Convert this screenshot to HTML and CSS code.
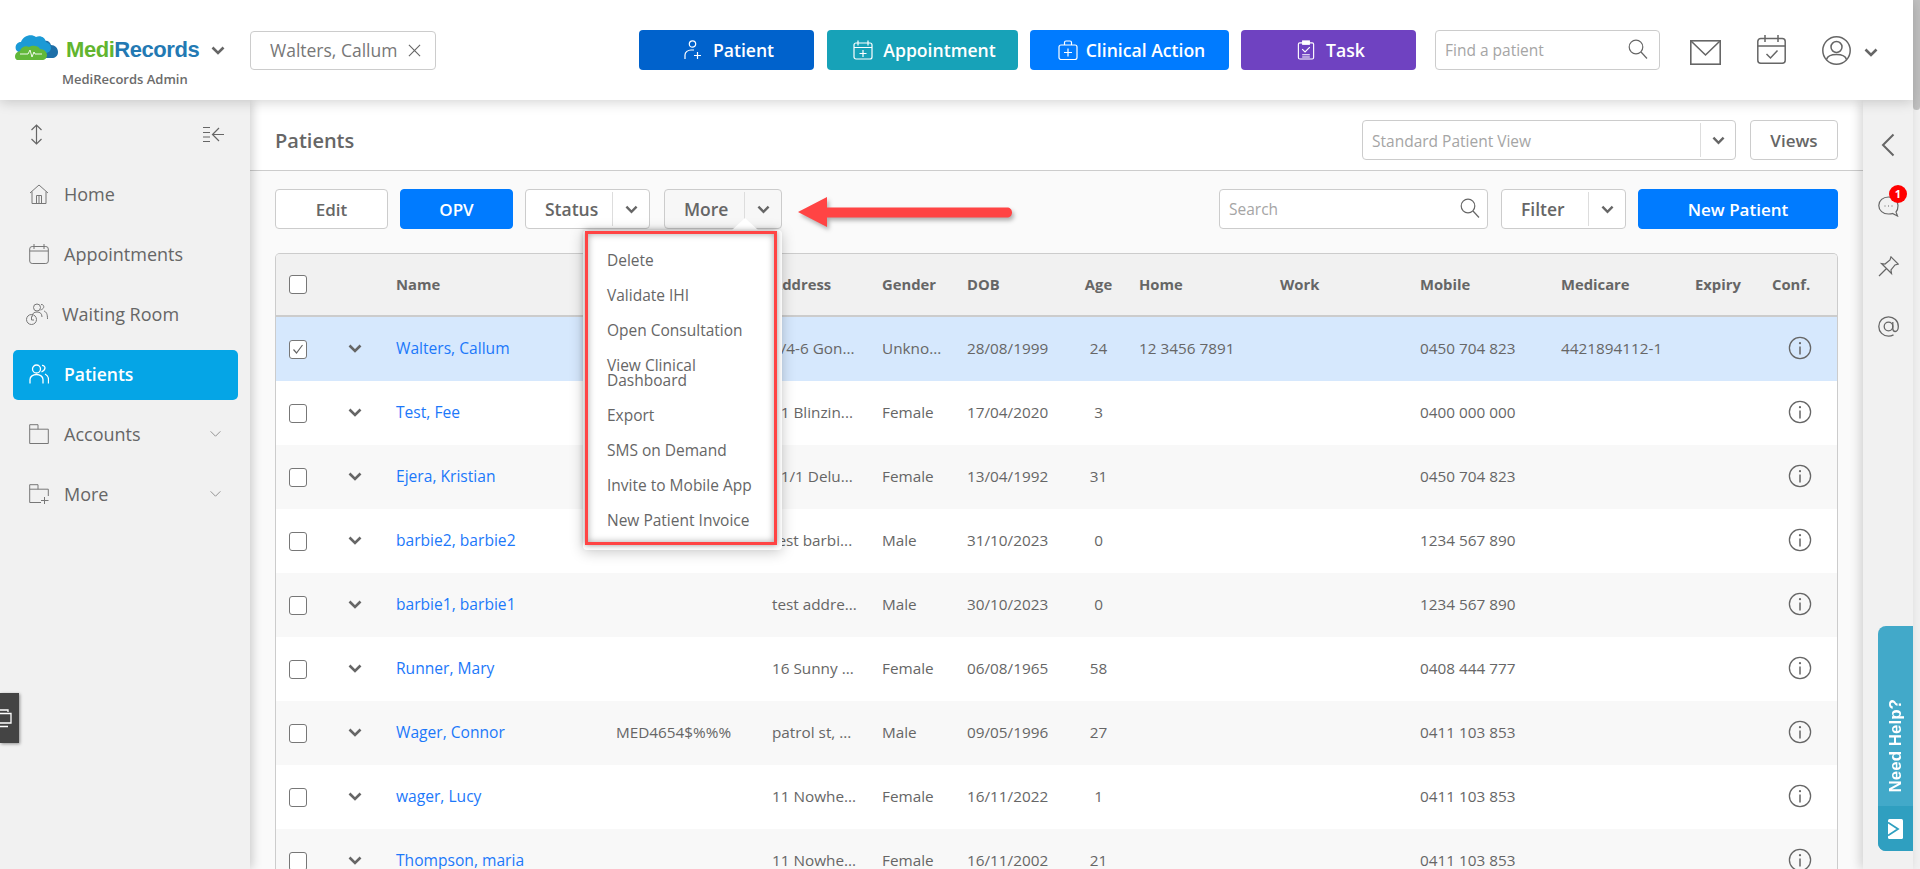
FILE: index.html
```html
<!DOCTYPE html>
<html lang="en">
<head>
<meta charset="utf-8">
<title>MediRecords - Patients</title>
<link rel="stylesheet" href="styles.css">
</head>
<body>
<svg class="defs" width="0" height="0" aria-hidden="true">
  <symbol id="chev" viewBox="0 0 14 9"><path d="M1.5 1.5 7 7l5.5-5.5" fill="none" stroke="currentColor" stroke-width="2.6"/></symbol>
  <symbol id="thin-chev" viewBox="0 0 14 9"><path d="M1.5 1.5 7 7l5.5-5.5" fill="none" stroke="currentColor" stroke-width="1"/></symbol>
  <symbol id="search" viewBox="0 0 20 20"><circle cx="8" cy="8" r="6.8" fill="none" stroke="currentColor" stroke-width="1.2"/><path d="m13 13 6 6.5" fill="none" stroke="currentColor" stroke-width="1.2"/></symbol>
  <symbol id="info" viewBox="0 0 24 24"><circle cx="12" cy="12" r="10.6" fill="none" stroke="currentColor" stroke-width="1.3"/><path d="M12 10.5v8" stroke="currentColor" stroke-width="1.5"/><circle cx="12" cy="7.2" r="1.1" fill="currentColor"/></symbol>
</svg>
<div class="page">
  <div class="app">
    <header class="topbar">
      <div class="brand">
        <div class="brand-row">
          <svg class="cloud" viewBox="0 0 44 26">
            <path d="M30 7c4-1 6 1 7 4 4 0 7 3 7 7 0 4-3 6-6 6H26z" fill="#1d6fa8"/>
            <path d="M3 17C0 14 2 8 7 8 9 2 17-1 22 3c4-2 9 0 10 5 3 1 5 3 5 6 0 3-3 5-6 5H6z" fill="#1b9ad6"/>
            <path d="M3 26c-3-1-3-8 3-9 1-4 6-6 9-4 3-2 9-2 11 2 4 0 7 3 7 6 0 3-2 5-5 5z" fill="#62b83a"/>
            <path d="M6 20h8l2-4 2 7 2-5 1 2h7" fill="none" stroke="#fff" stroke-width=".9"/>
          </svg>
          <span class="brand-name"><span class="medi">Medi</span><span class="records">Records</span></span>
          <svg class="brand-chev"><use href="#chev"/></svg>
        </div>
        <div class="brand-sub">MediRecords Admin</div>
      </div>
      <div class="patient-tag">
        <span>Walters, Callum</span>
        <svg class="tag-x" viewBox="0 0 14 14"><path d="m1 1 12 12M13 1 1 13" stroke="currentColor" stroke-width="1.2"/></svg>
      </div>
      <div class="actions">
        <button class="action a-patient">
          <svg viewBox="0 0 18 20" class="a-icon"><circle cx="8.5" cy="4" r="3.2"/><path d="M1 19v-4c0-3 3-5 6-5h3M13.5 12v7M10 15.5h7"/></svg>Patient</button>
        <button class="action a-appt">
          <svg viewBox="0 0 20 20" class="a-icon"><rect x="1" y="3" width="18" height="16" rx="2"/><path d="M5 .5v5M15 .5v5M1 7.5h18M10 10v7M6.5 13.5h7"/></svg>Appointment</button>
        <button class="action a-clin">
          <svg viewBox="0 0 20 20" class="a-icon"><rect x="1" y="5" width="18" height="14.5" rx="2"/><path d="M6.5 5V2.5C6.5 1.5 7.5 1 8 1h4c.5 0 1.5.5 1.5 1.5V5M10 8.5v8M6 12.5h8"/></svg>Clinical Action</button>
        <button class="action a-task">
          <svg viewBox="0 0 18 21" class="a-icon"><rect x="1" y="3" width="16" height="17" rx="1.5"/><rect x="5.5" y="1" width="7" height="3.5" fill="#fff"/><path d="m5 9.5 3 3 5-5M5 15.5h8M5 17.8h8"/></svg>Task</button>
      </div>
      <div class="find">
        <span>Find a patient</span>
        <svg class="find-icon"><use href="#search"/></svg>
      </div>
      <svg class="t-mail" viewBox="0 0 31 25"><rect x=".8" y=".8" width="29.4" height="23.4" fill="none" stroke="#666" stroke-width="1.6"/><path d="m1 1 14.5 14L30 1" fill="none" stroke="#666" stroke-width="1.6"/></svg>
      <svg class="t-cal" viewBox="0 0 29 29"><rect x=".8" y="3.5" width="27.4" height="24.7" rx="3" fill="none" stroke="#666" stroke-width="1.5"/><path d="M.8 11h27.4M8 0v7M21 0v7M9.5 19l4 4 7-7.5" fill="none" stroke="#666" stroke-width="1.5"/></svg>
      <svg class="t-user" viewBox="0 0 29 29"><circle cx="14.5" cy="14.5" r="13.7" fill="none" stroke="#666" stroke-width="1.5"/><circle cx="14.5" cy="11" r="5.5" fill="none" stroke="#666" stroke-width="1.5"/><path d="M4.5 23.5c1-3.5 4.5-5 10-5s9 1.500 10 5" fill="none" stroke="#666" stroke-width="1.5"/></svg>
      <svg class="t-chev"><use href="#chev"/></svg>
    </header>
    <div class="body">
      <aside class="sidebar">
        <div class="side-top">
          <svg class="side-updown" viewBox="0 0 13 21"><path d="M6.5 1v19M1.5 6l5-5 5 5M1.5 15l5 5 5-5" fill="none" stroke="#666" stroke-width="1.2"/></svg>
          <svg class="side-collapse" viewBox="0 0 21 17"><path d="M0 1.5h7M0 6.5h7M0 11h7M0 15.5h7M21 8.5H10M16 2l-6.5 6.500L16 15" fill="none" stroke="#666" stroke-width="1.2"/></svg>
        </div>
        <nav class="side-nav">
          <a class="nav-item">
            <svg class="nav-icon" viewBox="0 0 20 20"><path d="M1 9 10 1l9 8M3 7.5V19.5h14V7.5M7.5 19.5v-8h5v8M10 11.5v8" fill="none" stroke="currentColor"/></svg>
            <span>Home</span></a>
          <a class="nav-item">
            <svg class="nav-icon" viewBox="0 0 20 20"><rect x=".7" y="2.5" width="18.6" height="17" rx="2.5" fill="none" stroke="currentColor"/><path d="M.7 7h18.6M5 0v5M15 0v5" fill="none" stroke="currentColor"/></svg>
            <span>Appointments</span></a>
          <a class="nav-item">
            <svg class="nav-icon nav-wait" viewBox="0 0 22 22"><circle cx="11" cy="4.5" r="3.5" fill="none" stroke="currentColor"/><path d="M6 14c0-3.5 2-5 5-5 3 0 5 1.5 5 5M15 1.5c3-.5 4.5 4-.5 5.5M18 8c2.5 1 3.5 3 3.5 8" fill="none" stroke="currentColor"/><circle cx="5.5" cy="16.5" r="5" fill="none" stroke="currentColor"/><path d="M5.500 13.500v3.500h2.500" fill="none" stroke="currentColor"/></svg>
            <span>Waiting Room</span></a>
          <a class="nav-item active">
            <svg class="nav-icon" viewBox="0 0 20 20"><circle cx="7.5" cy="5" r="4" fill="none" stroke="currentColor" stroke-width="1.3"/><path d="M1 19.5v-4c0-3 3-5 6.5-5s6.500 2 6.500 5v4M13 1.500c3-.5 5 4-.5 6.500M16 10c2 1 3.500 3 3.500 5.500v4" fill="none" stroke="currentColor" stroke-width="1.3"/></svg>
            <span>Patients</span></a>
          <a class="nav-item">
            <svg class="nav-icon" viewBox="0 0 20 20"><path d="M.7 19.5V.7h8.300v4.500h10.300v14.300zM.7 5.200h8.300" fill="none" stroke="currentColor"/></svg>
            <span>Accounts</span><svg class="nav-chev"><use href="#thin-chev"/></svg></a>
          <a class="nav-item">
            <svg class="nav-icon" viewBox="0 0 20 20"><path d="M12 18.5H.7V.7h8.300v4.500h10.300V12M.7 5.200h8.300M15.500 13v7M12 16.500h7.500" fill="none" stroke="currentColor"/></svg>
            <span>More</span><svg class="nav-chev"><use href="#thin-chev"/></svg></a>
        </nav>
        <div class="remote-tab">
          <svg class="remote-icon" viewBox="0 0 12 19"><path d="M-4 2.5V1H8v2M-6 4.5H11V14H-6zM-3 17.5H8" fill="none" stroke="#fff" stroke-width="1.3"/></svg>
        </div>
      </aside>
      <main class="main">
        <div class="title-bar">
          <h1 class="title">Patients</h1>
          <div class="title-tools">
            <div class="view-select">
              <span class="view-label">Standard Patient View</span>
              <span class="split-sep"></span>
              <span class="split-chev"><svg class="chev-ico"><use href="#chev"/></svg></span>
            </div>
            <button class="btn btn-views">Views</button>
          </div>
        </div>
        <div class="toolbar">
          <button class="btn btn-edit">Edit</button>
          <button class="btn btn-primary btn-opv">OPV</button>
          <div class="split split-status">
            <span class="split-text">Status</span><span class="split-sep"></span>
            <span class="split-chev"><svg class="chev-ico"><use href="#chev"/></svg></span>
          </div>
          <div class="split split-more">
            <span class="split-text">More</span><span class="split-sep"></span>
            <span class="split-chev"><svg class="chev-ico"><use href="#chev"/></svg></span>
            <div class="menu">
              <div class="menu-item">Delete</div>
              <div class="menu-item">Validate IHI</div>
              <div class="menu-item">Open Consultation</div>
              <div class="menu-item">View Clinical Dashboard</div>
              <div class="menu-item">Export</div>
              <div class="menu-item">SMS on Demand</div>
              <div class="menu-item">Invite to Mobile App</div>
              <div class="menu-item">New Patient Invoice</div>
              <div class="menu-mark"></div>
            </div>
            <svg class="red-arrow" viewBox="0 0 225 40"><path d="M4 18 33 3v10.5h180c3 0 5 2 5 5s-2 5-5 5H33V33z" fill="#ff4444"/></svg>
          </div>
          <div class="search">
            <span>Search</span>
            <svg class="find-icon"><use href="#search"/></svg>
          </div>
          <div class="split split-filter">
            <span class="split-text">Filter</span><span class="split-sep"></span>
            <span class="split-chev"><svg class="chev-ico"><use href="#chev"/></svg></span>
          </div>
          <button class="btn btn-primary btn-new">New Patient</button>
        </div>
        <div class="table">
          <div class="tr th">
            <div class="c-check"><span class="box"></span></div><div></div>
            <div>Name</div><div></div><div>Address</div><div>Gender</div><div>DOB</div><div>Age</div><div>Home</div><div>Work</div><div>Mobile</div><div>Medicare</div><div>Expiry</div><div>Conf.</div>
          </div>
          <div class="tr selected">
            <div class="c-check"><span class="box"><svg class="tick" viewBox="0 0 14 14"><path d="m2.5 7.5 3 3.5L11.5 3" fill="none" stroke="#666" stroke-width="1.2"/></svg></span></div>
            <div><svg class="row-chev"><use href="#chev"/></svg></div>
            <div class="name">Walters, Callum</div><div></div><div>1/4-6 Gon...</div><div>Unkno...</div><div>28/08/1999</div><div>24</div><div>12 3456 7891</div><div></div><div>0450 704 823</div><div>4421894112-1</div><div></div><div class="c-info"><svg class="info-ico"><use href="#info"/></svg></div>
          </div>
          <div class="tr">
            <div class="c-check"><span class="box"></span></div>
            <div><svg class="row-chev"><use href="#chev"/></svg></div>
            <div class="name">Test, Fee</div><div></div><div>11 Blinzin...</div><div>Female</div><div>17/04/2020</div><div>3</div><div></div><div></div><div>0400 000 000</div><div></div><div></div><div class="c-info"><svg class="info-ico"><use href="#info"/></svg></div>
          </div>
          <div class="tr">
            <div class="c-check"><span class="box"></span></div>
            <div><svg class="row-chev"><use href="#chev"/></svg></div>
            <div class="name">Ejera, Kristian</div><div></div><div>11/1 Delu...</div><div>Female</div><div>13/04/1992</div><div>31</div><div></div><div></div><div>0450 704 823</div><div></div><div></div><div class="c-info"><svg class="info-ico"><use href="#info"/></svg></div>
          </div>
          <div class="tr">
            <div class="c-check"><span class="box"></span></div>
            <div><svg class="row-chev"><use href="#chev"/></svg></div>
            <div class="name">barbie2, barbie2</div><div></div><div>test barbi...</div><div>Male</div><div>31/10/2023</div><div>0</div><div></div><div></div><div>1234 567 890</div><div></div><div></div><div class="c-info"><svg class="info-ico"><use href="#info"/></svg></div>
          </div>
          <div class="tr">
            <div class="c-check"><span class="box"></span></div>
            <div><svg class="row-chev"><use href="#chev"/></svg></div>
            <div class="name">barbie1, barbie1</div><div></div><div>test addre...</div><div>Male</div><div>30/10/2023</div><div>0</div><div></div><div></div><div>1234 567 890</div><div></div><div></div><div class="c-info"><svg class="info-ico"><use href="#info"/></svg></div>
          </div>
          <div class="tr">
            <div class="c-check"><span class="box"></span></div>
            <div><svg class="row-chev"><use href="#chev"/></svg></div>
            <div class="name">Runner, Mary</div><div></div><div>16 Sunny ...</div><div>Female</div><div>06/08/1965</div><div>58</div><div></div><div></div><div>0408 444 777</div><div></div><div></div><div class="c-info"><svg class="info-ico"><use href="#info"/></svg></div>
          </div>
          <div class="tr">
            <div class="c-check"><span class="box"></span></div>
            <div><svg class="row-chev"><use href="#chev"/></svg></div>
            <div class="name">Wager, Connor</div><div>MED4654$%%%</div><div>patrol st, ...</div><div>Male</div><div>09/05/1996</div><div>27</div><div></div><div></div><div>0411 103 853</div><div></div><div></div><div class="c-info"><svg class="info-ico"><use href="#info"/></svg></div>
          </div>
          <div class="tr">
            <div class="c-check"><span class="box"></span></div>
            <div><svg class="row-chev"><use href="#chev"/></svg></div>
            <div class="name">wager, Lucy</div><div></div><div>11 Nowhe...</div><div>Female</div><div>16/11/2022</div><div>1</div><div></div><div></div><div>0411 103 853</div><div></div><div></div><div class="c-info"><svg class="info-ico"><use href="#info"/></svg></div>
          </div>
          <div class="tr">
            <div class="c-check"><span class="box"></span></div>
            <div><svg class="row-chev"><use href="#chev"/></svg></div>
            <div class="name">Thompson, maria</div><div></div><div>11 Nowhe...</div><div>Female</div><div>16/11/2002</div><div>21</div><div></div><div></div><div>0411 103 853</div><div></div><div></div><div class="c-info"><svg class="info-ico"><use href="#info"/></svg></div>
          </div>
        </div>
      </main>
      <aside class="rail">
        <svg class="r-back" viewBox="0 0 14 24"><path d="M12.5 1.5 2 12l10.5 10.5" fill="none" stroke="#666" stroke-width="2"/></svg>
        <div class="r-chat">
          <svg class="r-ico" viewBox="0 0 21 21"><path d="M10.5 1C5 1 .8 4.5.8 9.5S5 18 10.5 18c1.5 0 3 0 4-.5l5 2.5-1.5-4c1.5-1.5 2-4 2-6.5C20 4.5 16 1 10.5 1z" fill="none" stroke="#666" stroke-width="1.2"/><path d="M6.5 10h1M10 10h1M13.5 10h1" stroke="#666" stroke-width="1"/></svg>
          <span class="r-badge">1</span>
        </div>
        <svg class="r-ico" viewBox="0 0 21 21"><path d="M13 .8 20.2 8 17 9l-4 5 .5 3.5L3.5 7.5 7 8l5-4zM8.5 12.5 1 20" fill="none" stroke="#666" stroke-width="1.2"/></svg>
        <svg class="r-ico" viewBox="0 0 21 21"><circle cx="10.5" cy="10.5" r="4.3" fill="none" stroke="#666" stroke-width="1.3"/><path d="M14.8 6v6.5c0 2 1 3 2.5 3s3-2 3-5c0-5.5-4.5-9.7-9.8-9.7S.8 5 .8 10.5s4.3 9.7 9.7 9.7c2 0 3.5-.5 5-1.3" fill="none" stroke="#666" stroke-width="1.3"/></svg>
        <div class="help">
          <div class="help-label"><span>Need Help?</span></div>
          <div class="help-icon"><svg viewBox="0 0 15 20" class="help-svg"><rect width="15" height="20" rx="1.5" fill="#fff"/><path d="M0 3.5 10 10 0 16.5" fill="none" stroke="#2f9fc0" stroke-width="1.8"/></svg></div>
        </div>
      </aside>
    </div>
  </div>
  <div class="scrollbar"><div class="thumb"></div></div>
</div>
</body>
</html>
```
FILE: styles.css
```css
* { box-sizing: border-box; }
html, body { margin: 0; height: 869px; overflow: hidden; }
body { font-family: "Open Sans", "Liberation Sans", sans-serif; color: #666; background: #fff; }
.defs { position: absolute; }
button { font: inherit; cursor: pointer; }
svg { display: block; flex: none; }

.page { display: flex; height: 869px; overflow: hidden; }
.app { flex: 1; min-width: 0; display: flex; flex-direction: column; }
.scrollbar { width: 7px; background: #f1f1f1; }
.thumb { height: 110px; background: #c1c1c1; border-radius: 0 0 4px 4px; }

/* top bar */
.topbar { height: 100px; flex: none; display: flex; align-items: center; padding: 0 35px 0 14px; background: #fff; box-shadow: 0 2px 12px rgba(0,0,0,.18); position: relative; z-index: 5; }
.brand { width: 212px; margin-right: 24px; align-self: flex-start; padding-top: 36px; }
.brand-row { display: flex; align-items: center; height: 28px; }
.cloud { width: 44px; height: 26px; margin: -6px 8px 0 0; }
.brand-name { font-family: "Liberation Sans", Arial, sans-serif; font-weight: 700; font-size: 22px; letter-spacing: -.45px; white-space: nowrap; }
.medi { color: #62b52f; }
.records { color: #2379b3; }
.brand-chev { width: 14px; height: 9px; margin-left: 12px; color: #666; }
.brand-sub { margin: 6px 0 0 48px; font-size: 13px; font-weight: 600; line-height: 18px; color: #6b6b6b; white-space: nowrap; }
.patient-tag { width: 186px; height: 39px; display: flex; align-items: center; padding-left: 19px; border: 1px solid #ccc; border-radius: 4px; font-size: 17.5px; color: #777; white-space: nowrap; }
.tag-x { width: 13px; height: 13px; margin-left: 11px; color: #666; }
.actions { display: flex; gap: 12px; margin-left: 203px; }
.action { height: 40px; display: flex; align-items: center; justify-content: center; gap: 10px; padding: 0 0 0 4px; border: 0; border-radius: 4px; color: #fff; font-size: 17.6px; font-weight: 600; white-space: nowrap; }
.a-icon { height: 20px; width: 20px; fill: none; stroke: #fff; stroke-width: 1.2; }
.a-patient { width: 175px; background: #0062cc; margin-right: 1px; }
.a-appt { width: 191px; background: #17a2b8; }
.a-clin { width: 199px; background: #007bff; gap: 8px; }
.a-task { width: 175px; background: #6f42c1; }
.find { width: 225px; height: 40px; margin-left: 19px; padding: 0 11px 0 9px; display: flex; align-items: center; justify-content: space-between; border: 1px solid #ccc; border-radius: 4px; font-size: 15.5px; color: #a5a5a5; }
.find-icon { width: 20px; height: 20px; color: #666; margin-top: -2px; }
.t-mail { width: 31px; height: 25px; margin: 4px 0 0 30px; }
.t-cal { width: 29px; height: 29px; margin: -1px 0 0 36px; }
.t-user { width: 29px; height: 29px; margin: 0 0 0 36px; }
.t-chev { width: 14px; height: 9px; margin: 4px 0 0 13px; color: #666; }

/* layout */
.body { flex: 1; min-height: 0; display: flex; }

/* sidebar */
.sidebar { width: 250px; flex: none; background: #f1f1f1; box-shadow: 2px 0 10px rgba(0,0,0,.2); position: relative; z-index: 3; }
.side-top { height: 70px; display: flex; justify-content: space-between; align-items: center; padding: 0 26px 2px 30px; }
.side-updown { width: 13px; height: 21px; }
.side-collapse { width: 21px; height: 17px; }
.side-nav { display: flex; flex-direction: column; gap: 10px; padding: 0 12px 0 13px; }
.nav-item { height: 50px; display: flex; align-items: center; padding: 0 16px 2px 16px; border-radius: 5px; font-size: 18px; color: #666; }
.nav-item span { flex: 1; }
.nav-icon { width: 20px; height: 20px; margin-right: 15px; color: #777; }
.nav-wait { width: 22px; height: 22px; margin-left: -3px; margin-right: 14px; }
.nav-item.active { background: #05a5e6; color: #fff; font-weight: 600; font-size: 17.5px; }
.nav-item.active .nav-icon { color: #fff; }
.nav-chev { width: 13px; height: 8px; color: #888; }
.remote-tab { position: absolute; left: 0; top: 593px; width: 19px; height: 50px; background: #444; box-shadow: 1px 1px 3px rgba(0,0,0,.4); display: flex; align-items: center; }
.remote-icon { width: 12px; height: 19px; }

/* main */
.main { flex: 1; min-width: 0; background: #fafafa; overflow: hidden; }
.title-bar { height: 71px; padding: 10px 25px 0; display: flex; align-items: center; justify-content: space-between; background: #fff; border-bottom: 1px solid #ccc; }
.title { margin: 0; font-size: 20px; font-weight: 600; color: #666; }
.title-tools { display: flex; gap: 14px; }
.view-select { width: 374px; height: 40px; display: flex; align-items: center; border: 1px solid #ccc; border-radius: 4px; background: #fff; font-size: 15.5px; color: #a5a5a5; padding-left: 9px; }
.view-label { flex: 1; padding-top: 2px; }
.view-select .split-chev { width: 34px; }
.split-sep { width: 1px; height: 34px; background: #ddd; flex: none; }
.split-chev { width: 36px; flex: none; display: flex; justify-content: center; color: #666; }
.chev-ico { width: 13px; height: 9px; }
.btn { height: 40px; border: 1px solid #ccc; border-radius: 4px; background: #fff; color: #666; font-size: 17px; font-weight: 600; }
.btn-views { width: 88px; }
.toolbar { display: flex; align-items: center; padding: 18px 25px 0; margin-bottom: 24px; }
.btn-edit { width: 113px; margin-right: 12px; }
.btn-primary { background: #007bff; border-color: #007bff; color: #fff; }
.btn-opv { width: 113px; margin-right: 12px; }
.split { height: 40px; display: flex; align-items: center; border: 1px solid #ccc; border-radius: 4px; background: #fff; font-size: 17.5px; font-weight: 600; color: #666; position: relative; }
.split-text { flex: 1; padding-left: 19px; }
.split-status { width: 125px; margin-right: 14px; }
.split-more { width: 118px; background: #f7f7f7; }
.split-filter { width: 125px; margin-right: 12px; }
.search { width: 269px; height: 40px; margin-left: auto; margin-right: 13px; display: flex; align-items: center; justify-content: space-between; padding: 0 7px 0 9px; background: #fff; border: 1px solid #ccc; border-radius: 4px; font-size: 15.5px; color: #a5a5a5; }
.btn-new { width: 200px; }

/* dropdown */
.menu { position: absolute; left: -82px; top: 40px; width: 199px; height: 320px; padding: 13px 0 0 24px; background: #fff; border-radius: 4px; box-shadow: 0 2px 14px rgba(0,0,0,.22); font-size: 15.5px; font-weight: 500; color: #666; z-index: 4; }
.menu::before { content: ""; position: absolute; left: 149px; top: -12px; border: 13px solid transparent; border-top: 0; border-bottom: 12px solid #fff; }
.menu-item { min-height: 35px; width: 165px; line-height: 15px; padding: 10px 0; white-space: normal; }
.menu-item:nth-child(4) { padding-top: 10px; padding-bottom: 10px; }
.menu-mark { position: absolute; left: 2px; top: 1px; width: 192px; height: 314px; border: 3px solid #ff4444; box-shadow: 0 0 6px rgba(0,0,0,.4), inset 0 0 7px rgba(0,0,0,.35); }
.red-arrow { position: absolute; left: 129px; top: 4px; width: 225px; height: 40px; filter: drop-shadow(2px 3px 2px rgba(0,0,0,.3)); }

/* table */
.table { margin: 0 25px; border: 1px solid #ccc; border-bottom: 0; border-radius: 5px 5px 0 0; overflow: hidden; }
.tr { height: 64px; display: grid; grid-template-columns: 72px 48px 220px 156px 110px 85px 117px 55px 141px 140px 141px 134px 77px 64px; align-items: center; padding-bottom: 2px; font-size: 15.3px; color: #666; background: #fff; white-space: nowrap; }
.tr:nth-child(even) { background: #f8f8f8; }
.tr.th { height: 63px; background: #f1f1f1; border-bottom: 2px solid #ccc; font-size: 14.8px; font-weight: 700; }
.tr.selected { background: #d6e8fd; }
.tr > :nth-child(8) { width: 29px; text-align: center; }
.c-check { padding-left: 13px; display: flex; margin-top: 2px; }
.box { width: 18px; height: 19px; display: block; border: 1px solid #777; border-radius: 3px; background: #fff; }
.tick { width: 14px; height: 14px; margin: 1px; }
.row-chev { width: 14px; height: 9px; color: #666; }
.name { color: #1c78fa; font-size: 15.6px; font-weight: 500; }
.c-info { padding-left: 16px; }
.info-ico { width: 24px; height: 24px; color: #666; }

/* right rail */
.rail { width: 50px; flex: none; display: flex; flex-direction: column; align-items: flex-start; padding: 33px 0 0 15px; gap: 39px; background: #f1f1f1; box-shadow: -3px 0 10px rgba(0,0,0,.16); position: relative; z-index: 3; }
.r-back { width: 14px; height: 24px; margin-left: 3px; }
.r-chat { position: relative; height: 21px; }
.r-ico { width: 21px; height: 21px; }
.r-badge { position: absolute; left: 11px; top: -11px; width: 18px; height: 18px; border-radius: 50%; background: #f00; color: #fff; font-size: 11px; font-weight: 700; line-height: 18px; text-align: center; }
.help { position: absolute; left: 15px; top: 526px; width: 35px; height: 225px; border-radius: 8px 0 0 8px; overflow: hidden; background: #42a9c9; display: flex; flex-direction: column; }
.help-label { flex: 1; display: flex; align-items: flex-end; justify-content: center; padding-bottom: 13px; }
.help-label span { writing-mode: vertical-rl; transform: rotate(180deg); font-family: "Liberation Sans", Arial, sans-serif; font-weight: 700; font-size: 17px; color: #fff; white-space: nowrap; }
.help-icon { height: 45px; background: #2f9fc0; display: flex; align-items: center; justify-content: center; }
.help-svg { width: 15px; height: 20px; }
```
